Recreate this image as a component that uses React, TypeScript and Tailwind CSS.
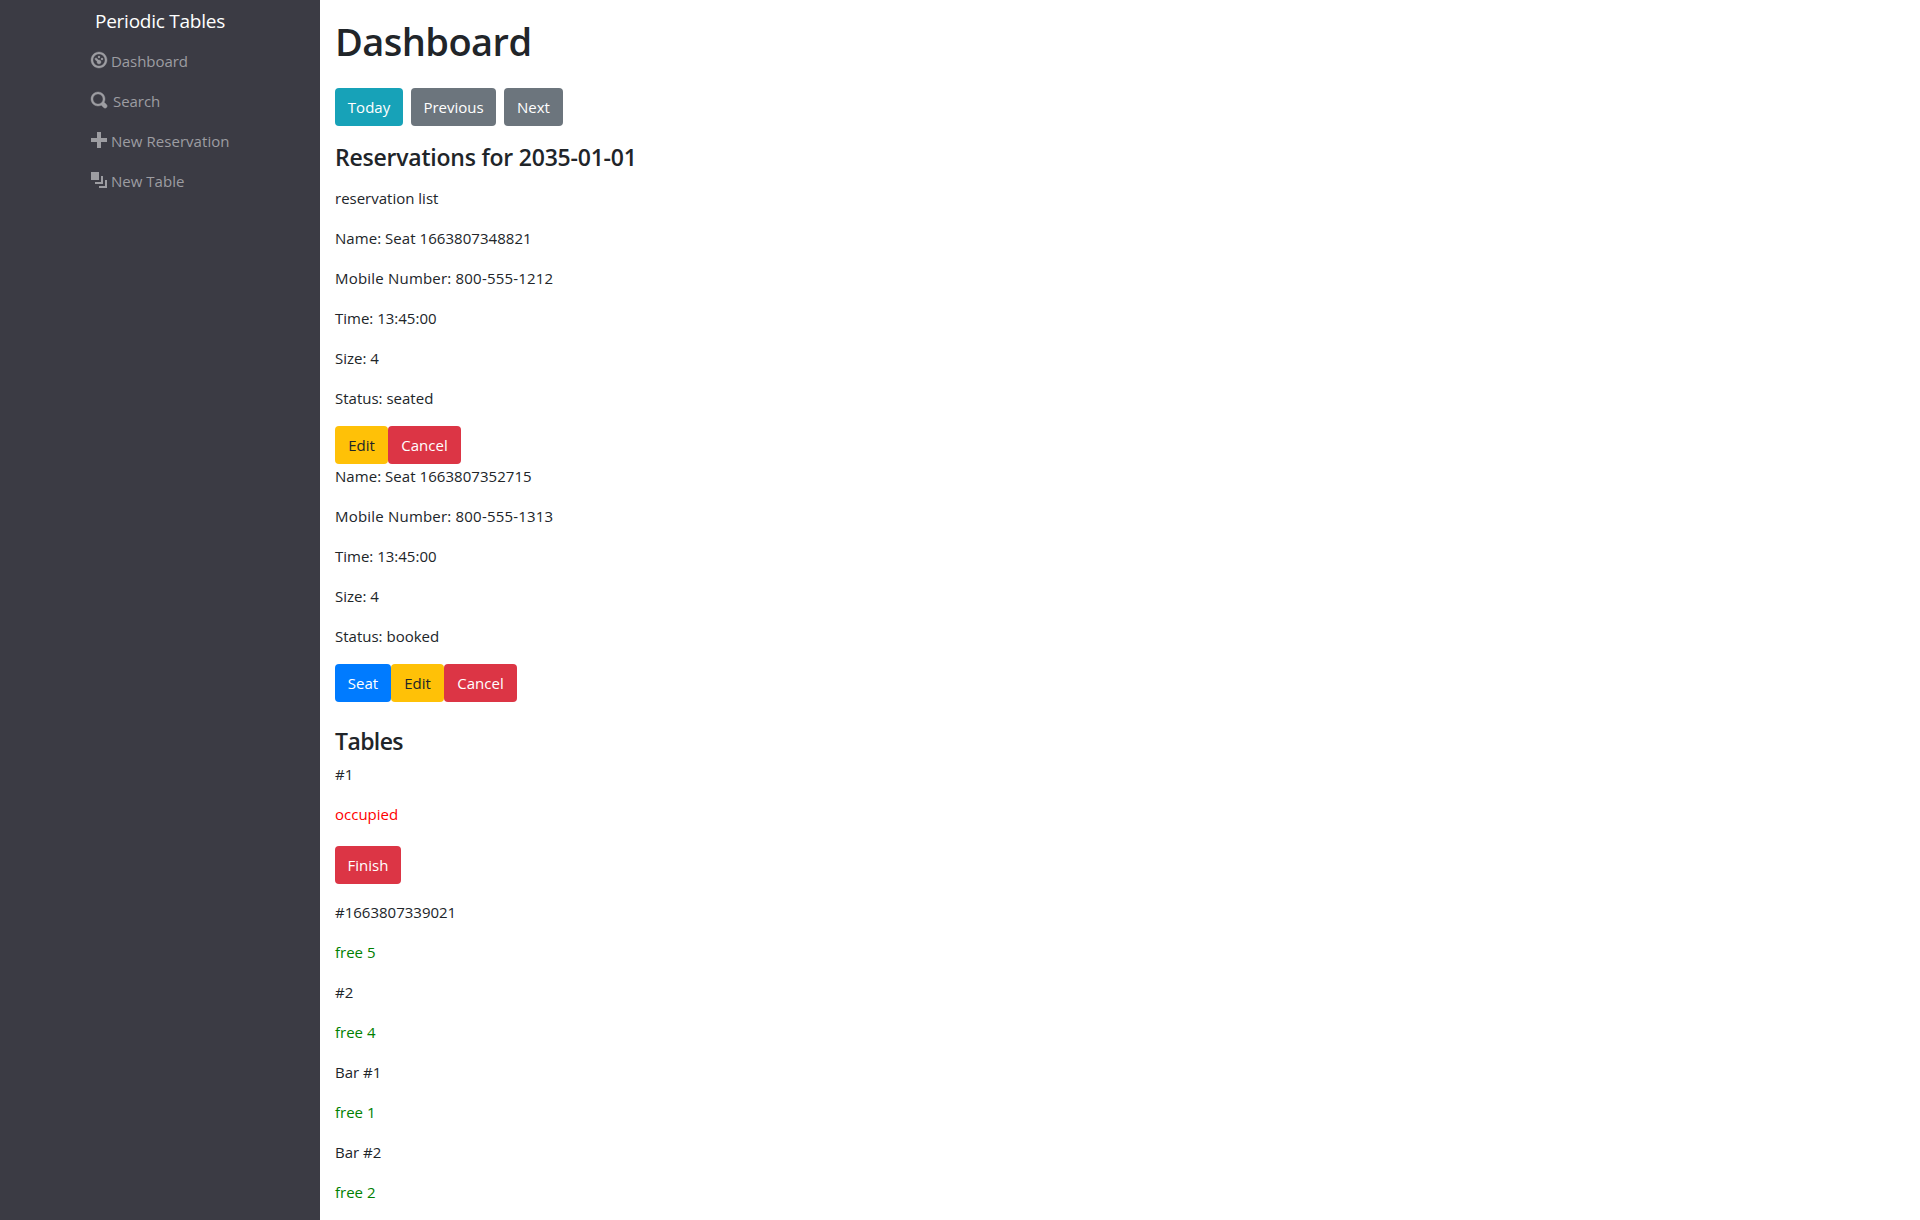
import React from "react";

const navItems = [
  {
    label: "Dashboard",
    text: "ml-1 tracking-[-0.05px]",
    icon: "stroke-current stroke-[0.2]",
    path: "M4 0c-2.2 0-4 1.8-4 4s1.8 4 4 4 4-1.8 4-4-1.8-4-4-4zm0 1c1.66 0 3 1.34 3 3s-1.34 3-3 3-3-1.34-3-3 1.34-3 3-3zm0 1c-.28 0-.5.22-.5.5s.22.5.5.5.5-.22.5-.5-.22-.5-.5-.5zm-1.66 1a.5.5 0 0 0-.19.84l.91.91c-.02.08-.06.16-.06.25 0 .55.45 1 1 1s1-.45 1-1-.45-1-1-1c-.09 0-.17.04-.25.06l-.91-.91a.5.5 0 0 0-.44-.16.5.5 0 0 0-.06 0zm3.16 0c-.28 0-.5.22-.5.5s.22.5.5.5.5-.22.5-.5-.22-.5-.5-.5z",
  },
  {
    label: "Search",
    text: "ml-1.5 tracking-[-0.05px]",
    icon: "stroke-current stroke-[0.2]",
    path: "M3.5 0c-1.93 0-3.5 1.57-3.5 3.5s1.57 3.5 3.5 3.5c.59 0 1.17-.14 1.66-.41a1 1 0 0 0 .13.13l1 1a1.02 1.02 0 1 0 1.44-1.44l-1-1a1 1 0 0 0-.16-.13c.27-.49.44-1.06.44-1.66 0-1.93-1.55-3.5-3.5-3.5zm0 1c1.39 0 2.5 1.11 2.5 2.5 0 .66-.24 1.27-.66 1.72-.01.01-.02.02-.03.03a1 1 0 0 0-.13.13c-.44.4-1.04.63-1.69.63-1.39 0-2.5-1.11-2.5-2.5s1.11-2.5 2.5-2.5z",
  },
  {
    label: "New Reservation",
    text: "ml-1 tracking-[0.05px]",
    icon: "",
    path: "M3 0v3h-3v2h3v3h2v-3h3v-2h-3v-3h-2z",
  },
  {
    label: "New Table",
    text: "ml-1 tracking-[0.02px]",
    icon: "",
    path: "M0 0v4h4v-4h-4zm5 2v3h-3v1h4v-4h-1zm2 2v3h-3v1h4v-4h-1z",
  },
];

const tables = [
  { name: "#1663807339021", seats: 5 },
  { name: "#2", seats: 4 },
  { name: "Bar #1", seats: 1 },
  { name: "Bar #2", seats: 2 },
];

function Button({ className, children }: { className: string; children: React.ReactNode }) {
  return (
    <button className={`flex h-[38px] items-center justify-center rounded-[4px] leading-6 ${className}`}>
      {children}
    </button>
  );
}

function Line({ className = "", children }: { className?: string; children: React.ReactNode }) {
  return <p className={`mb-4 h-6 leading-6 ${className}`}>{children}</p>;
}

function Reservation(props: { name: string; mobile: string; status: string; children: React.ReactNode }) {
  return (
    <div>
      <Line className="tracking-[0.05px]">Name: {props.name}</Line>
      <Line className="tracking-[0.2px]">Mobile Number: {props.mobile}</Line>
      <Line>Time: 13:45:00</Line>
      <Line>Size: 4</Line>
      <Line>Status: {props.status}</Line>
      <div className="flex">{props.children}</div>
    </div>
  );
}

export default function App() {
  return (
    <div className="flex h-[1220px] w-full overflow-hidden bg-white font-['Open_Sans',sans-serif] text-[15px] text-[#212529]">
      <nav className="w-[320px] shrink-0 bg-[#3b3b44]">
        <div className="pt-[6px] pl-[95px] text-[19px] leading-[30px] tracking-[-0.25px] text-white">Periodic Tables</div>
        <ul className="mt-[5px] pl-[91px] text-[#9d9da2]">
          {navItems.map((item) => (
            <li key={item.label} className="flex h-10 items-center">
              <svg viewBox="0 0 8 8" className={`mb-0.5 size-4 overflow-visible fill-current ${item.icon}`}>
                <path d={item.path} />
              </svg>
              <span className={`leading-6 ${item.text}`}>{item.label}</span>
            </li>
          ))}
        </ul>
      </nav>
      <main className="pl-[15px]">
        <h1 className="mt-[17px] mb-[23px] text-[38px] leading-[48px] font-semibold tracking-[-0.55px]">Dashboard</h1>
        <div className="flex gap-2 text-white">
          <Button className="w-[68px] bg-[#17a2b8]">Today</Button>
          <Button className="w-[85px] bg-[#6c757d]">Previous</Button>
          <Button className="w-[59px] bg-[#6c757d]">Next</Button>
        </div>
        <h4 className="mt-[17px] mb-[14px] h-[29px] text-[23px] leading-[29px] font-semibold tracking-[-0.22px]">Reservations for 2035-01-01</h4>
        <Line>reservation list</Line>
        <Reservation name="Seat 1663807348821" mobile="800-555-1212" status="seated">
          <Button className="w-[53px] bg-[#ffc107]">Edit</Button>
          <Button className="w-[73px] bg-[#dc3545] text-white">Cancel</Button>
        </Reservation>
        <Reservation name="Seat 1663807352715" mobile="800-555-1313" status="booked">
          <Button className="w-[56px] bg-[#007bff] text-white">Seat</Button>
          <Button className="w-[53px] bg-[#ffc107]">Edit</Button>
          <Button className="w-[73px] bg-[#dc3545] text-white">Cancel</Button>
        </Reservation>
        <h4 className="mt-[25px] mb-1.5 h-[29px] text-[23px] leading-[29px] font-semibold tracking-[-0.6px]">Tables</h4>
        <Line>#1</Line>
        <Line className="text-[#ff0000]">occupied</Line>
        <Button className="mt-5 mb-4 w-[66px] bg-[#dc3545] text-white">Finish</Button>
        {tables.map((table) => (
          <div key={table.name}>
            <Line>{table.name}</Line>
            <Line className="text-[#008000]">free {table.seats}</Line>
          </div>
        ))}
      </main>
    </div>
  );
}
